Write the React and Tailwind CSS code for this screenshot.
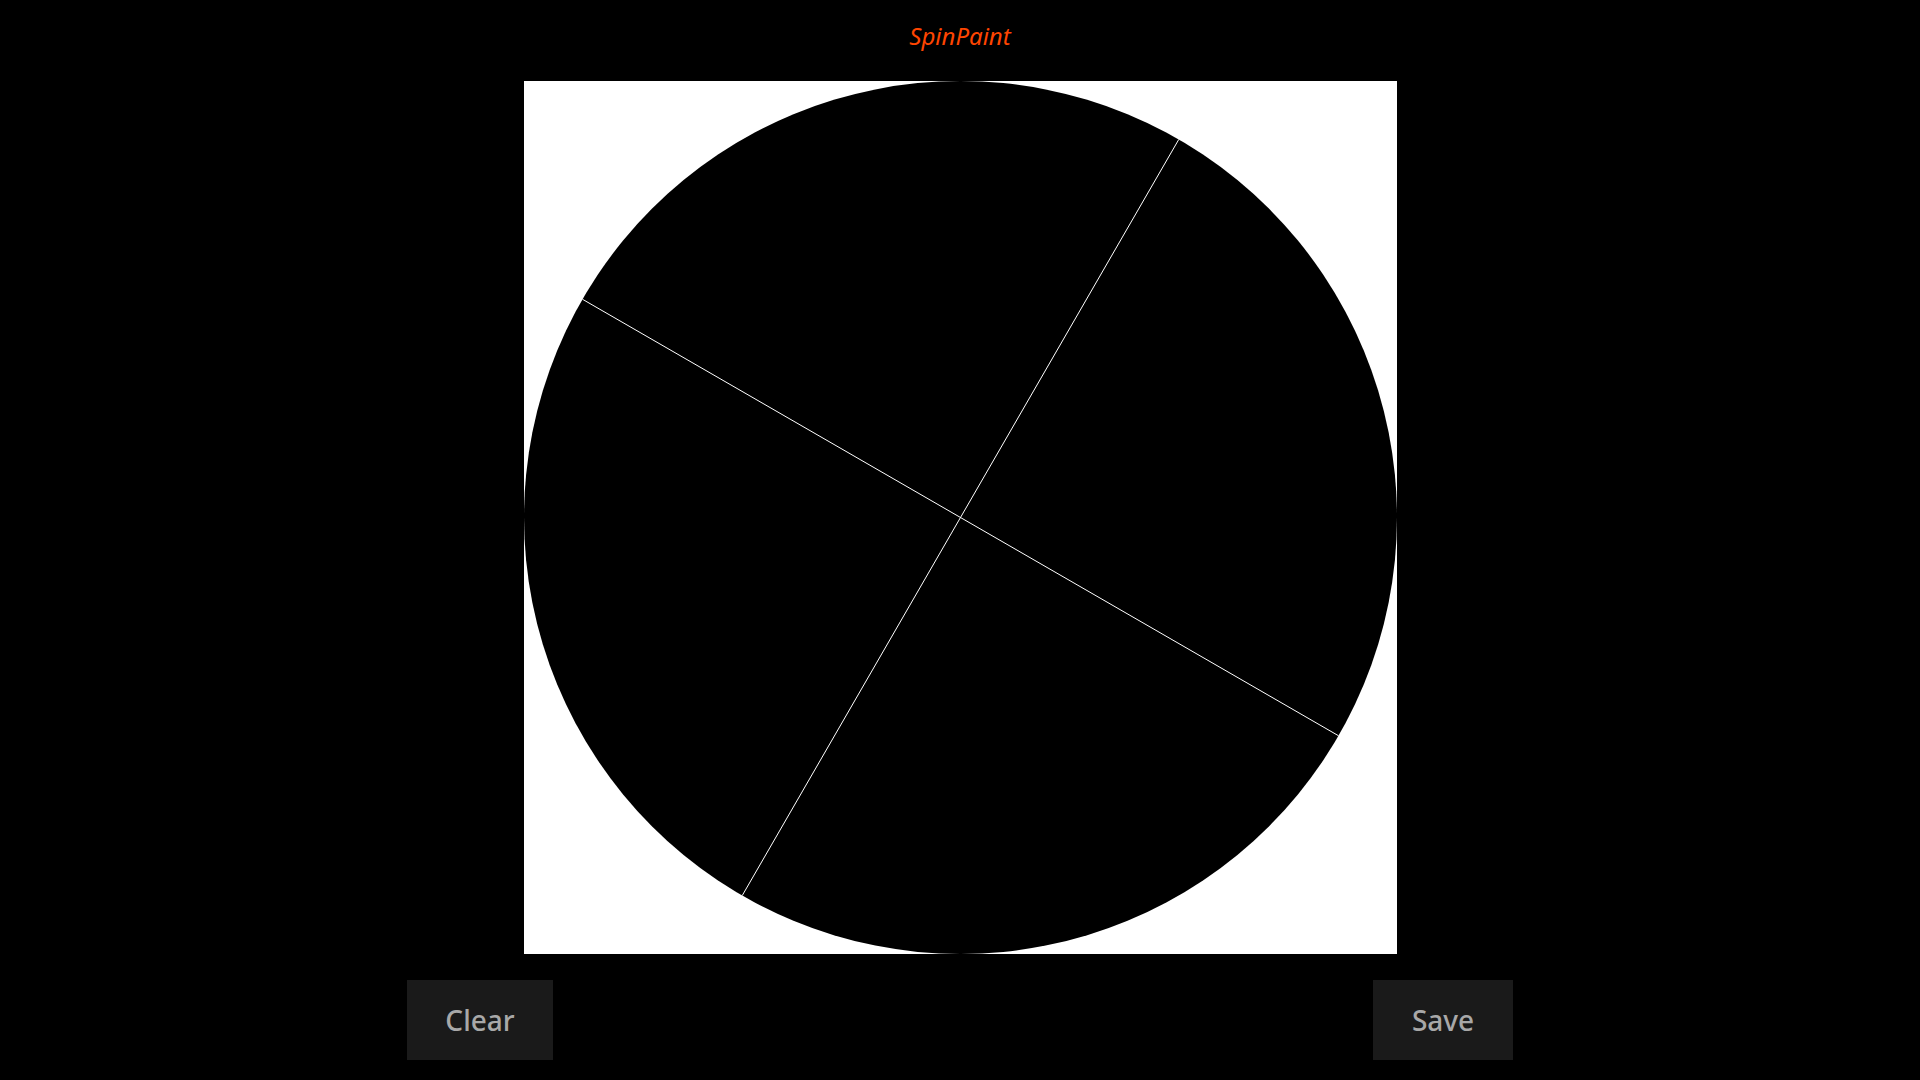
export default function App() {
  const size = 873;
  const c = size / 2;
  const r = size / 2;
  const a = (30 * Math.PI) / 180;
  const dx = Math.sin(a) * r;
  const dy = Math.cos(a) * r;
  return (
    <div
      className="w-[1920px] h-[1080px] bg-black flex flex-col items-center overflow-hidden"
      style={{ fontFamily: '"Noto Sans", "Open Sans", sans-serif' }}
    >
      <div className="mt-[24px] h-[24px] leading-[24px] text-[24px] italic text-[#ff4500]">
        SpinPaint
      </div>
      <div className="mt-[33px] w-[873px] h-[873px] bg-white">
        <svg width={size} height={size} viewBox={`0 0 ${size} ${size}`} className="block">
          <circle cx={c} cy={c} r={r} fill="#000" />
          <line x1={c + dx} y1={c - dy} x2={c - dx} y2={c + dy} stroke="#fff" strokeWidth="1" />
          <line x1={c - dy} y1={c - dx} x2={c + dy} y2={c + dx} stroke="#fff" strokeWidth="1" />
        </svg>
      </div>
      <div className="mt-[26px] w-[1106px] flex justify-between">
        <button className="w-[146px] h-[80px] bg-[#1a1a1a] text-[#a8a8a8] text-[28px] font-medium flex items-center justify-center">
          Clear
        </button>
        <button className="w-[140px] h-[80px] bg-[#1a1a1a] text-[#a8a8a8] text-[28px] font-medium flex items-center justify-center">
          Save
        </button>
      </div>
    </div>
  );
}
